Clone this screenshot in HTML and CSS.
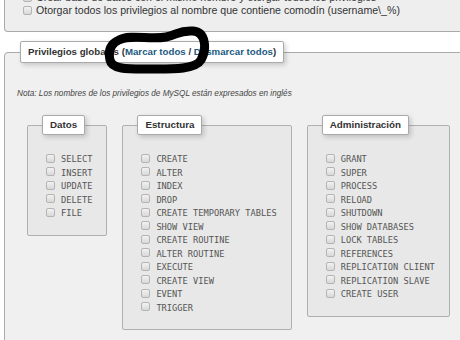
FILE: index.html
```html
<!DOCTYPE html>
<html lang="es">
<head>
    <meta charset="UTF-8">
    <title>Privilegios</title>
    <link rel="stylesheet" href="styles.css">
</head>
<body>
    <fieldset class="top-box">
        <div class="opt"><span class="chk"></span>Crear base de datos con el mismo nombre y otorgar todos los privilegios</div>
        <div class="opt"><span class="chk"></span>Otorgar todos los privilegios al nombre que contiene comodín (username\_%)</div>
    </fieldset>

    <fieldset class="priv">
        <legend>Privilegios globales (<a href="#">Marcar todos</a> / <a href="#">Desmarcar todos</a>)</legend>
        <p class="nota">Nota: Los nombres de los privilegios de MySQL están expresados en inglés</p>

        <div class="groups">
            <fieldset class="group">
                <legend>Datos</legend>
                <div class="item"><span class="chk"></span>SELECT</div>
                <div class="item"><span class="chk"></span>INSERT</div>
                <div class="item"><span class="chk"></span>UPDATE</div>
                <div class="item"><span class="chk"></span>DELETE</div>
                <div class="item"><span class="chk"></span>FILE</div>
            </fieldset>
            <fieldset class="group">
                <legend>Estructura</legend>
                <div class="item"><span class="chk"></span>CREATE</div>
                <div class="item"><span class="chk"></span>ALTER</div>
                <div class="item"><span class="chk"></span>INDEX</div>
                <div class="item"><span class="chk"></span>DROP</div>
                <div class="item"><span class="chk"></span>CREATE TEMPORARY TABLES</div>
                <div class="item"><span class="chk"></span>SHOW VIEW</div>
                <div class="item"><span class="chk"></span>CREATE ROUTINE</div>
                <div class="item"><span class="chk"></span>ALTER ROUTINE</div>
                <div class="item"><span class="chk"></span>EXECUTE</div>
                <div class="item"><span class="chk"></span>CREATE VIEW</div>
                <div class="item"><span class="chk"></span>EVENT</div>
                <div class="item"><span class="chk"></span>TRIGGER</div>
            </fieldset>
            <fieldset class="group">
                <legend>Administración</legend>
                <div class="item"><span class="chk"></span>GRANT</div>
                <div class="item"><span class="chk"></span>SUPER</div>
                <div class="item"><span class="chk"></span>PROCESS</div>
                <div class="item"><span class="chk"></span>RELOAD</div>
                <div class="item"><span class="chk"></span>SHUTDOWN</div>
                <div class="item"><span class="chk"></span>SHOW DATABASES</div>
                <div class="item"><span class="chk"></span>LOCK TABLES</div>
                <div class="item"><span class="chk"></span>REFERENCES</div>
                <div class="item"><span class="chk"></span>REPLICATION CLIENT</div>
                <div class="item"><span class="chk"></span>REPLICATION SLAVE</div>
                <div class="item"><span class="chk"></span>CREATE USER</div>
            </fieldset>
        </div>
    </fieldset>

    <!-- marca a mano encima del enlace -->
    <svg class="scribble" width="460" height="340" viewBox="0 0 460 340">
        <path d="M119 40 C131 34 150 40 166 37 C177 35 179 30 193 31 C206 32 207 49 201 60 C195 70 170 69 150 69 C130 69 112 70 110 60 C108 51 110 44 119 40 Z"/>
    </svg>
</body>
</html>
```

FILE: styles.css
```css
html {
    overflow: hidden;
}
body {
    margin: 0;
    background: #fff;
    font-family: "Liberation Sans", Arial, sans-serif;
    color: #333;
    position: relative;
    height: 340px;
    overflow: hidden;
}
fieldset {
    margin: 0;
    min-width: 0;
}
.chk {
    display: inline-block;
    width: 7px;
    height: 7px;
    border: 1px solid #b4b4b4;
    border-radius: 2px;
    background: linear-gradient(#f2f2f2, #d8d8d8);
    vertical-align: middle;
}

/* caja superior */
.top-box {
    margin: -10px -20px 0 4px;
    padding: 1px 10px 14px 18px;
    border: 1px solid #aaa;
    border-top: none;
    background: #eee;
    border-radius: 0 0 4px 4px;
}
.opt {
    font-size: 10.6px;
    line-height: 13px;
    color: #333;
    white-space: nowrap;
}
.opt .chk {
    margin: -2px 4px 0 0;
}

/* privilegios globales */
.priv {
    margin: 9px -20px 0 4px;
    padding: 0 10px 20px 12px;
    border: 1px solid #aaa;
    background: #f0f0f0;
    border-radius: 4px;
    height: 600px;
}
.priv > legend {
    margin-left: 3px;
    padding: 0 7px;
    font-size: 9.7px;
    font-weight: bold;
    line-height: 20px;
    color: #333;
    background: #fff;
    border: 1px solid #aaa;
    border-radius: 2px;
    box-shadow: 2px 2px 5px rgba(0, 0, 0, 0.18);
}
.priv > legend a {
    color: #235a81;
    text-decoration: none;
}
.nota {
    margin: 25px 0 0 0;
    font-size: 8.2px;
    font-style: italic;
    color: #444;
    line-height: 12px;
    white-space: nowrap;
}

.groups {
    display: flex;
    align-items: flex-start;
    gap: 15px;
    margin: 15px 0 0 10px;
}
.group {
    padding: 0 14px 14px 18px;
    border: 1px solid #b0b0b0;
    background: #e8e8e8;
    border-radius: 2px;
}
.group legend {
    margin-left: -4px;
    padding: 0 7px;
    font-size: 9.8px;
    font-weight: bold;
    line-height: 18px;
    color: #333;
    background: #fff;
    border: 1px solid #aaa;
    border-radius: 2px;
    box-shadow: 2px 2px 5px rgba(0, 0, 0, 0.18);
}
.group legend + .item {
    margin-top: 18px;
}
.item {
    font-family: "DejaVu Sans Mono", monospace;
    font-size: 8.7px;
    line-height: 13.5px;
    color: #555;
    white-space: nowrap;
}
.item .chk {
    margin: -3px 6px 0 0;
}

.scribble {
    position: absolute;
    top: 0;
    left: 0;
    pointer-events: none;
    filter: blur(0.5px);
}
.scribble path {
    fill: none;
    stroke: #000;
    stroke-width: 9;
    stroke-linecap: round;
    stroke-linejoin: round;
}
```
